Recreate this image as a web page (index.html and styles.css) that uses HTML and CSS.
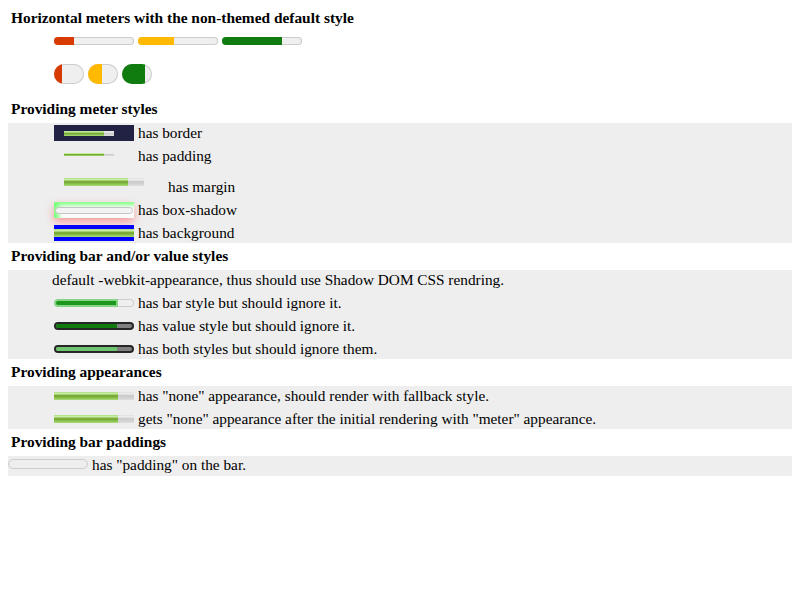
FILE: index.html
```html
<!DOCTYPE html>
<html>
<head>
<meta charset="utf-8">
<link rel="stylesheet" href="styles.css">
</head>
<body>
<div class="heading">Horizontal meters with the non-themed default style</div>
<div class="demo">
  <div class="native-line">
    <div class="native"><div class="nfill red" style="width:25%"></div></div>
    <div class="native"><div class="nfill yellow" style="width:45%"></div></div>
    <div class="native"><div class="nfill green" style="width:75%"></div></div>
  </div>
  <div class="pill-line">
    <div class="native pill"><div class="nfill red" style="width:26%"></div></div>
    <div class="native pill"><div class="nfill yellow" style="width:47%"></div></div>
    <div class="native pill"><div class="nfill green" style="width:75%"></div></div>
  </div>
</div>

<div class="heading">Providing meter styles</div>
<div class="section">
  <div class="row">
    <div class="m-border"><div class="fb fb-border"><div class="fb-value" style="width:80%"></div></div></div>
    <span class="label">has border</span>
  </div>
  <div class="row">
    <div class="m-padding"><div class="fb fb-thin"><div class="fb-value" style="width:80%"></div></div></div>
    <span class="label">has padding</span>
  </div>
  <div class="row tall">
    <div class="m-margin"><div class="fb fb-margin"><div class="fb-value" style="width:80%"></div></div></div>
    <span class="label label-margin">has margin</span>
  </div>
  <div class="row">
    <div class="m-shadow"><div class="shadow-pill"></div></div>
    <span class="label">has box-shadow</span>
  </div>
  <div class="row last">
    <div class="m-background"><div class="fb fb-full"><div class="fb-value" style="width:100%"></div></div></div>
    <span class="label">has background</span>
  </div>
</div>

<div class="heading">Providing bar and/or value styles</div>
<div class="section">
  <div class="row text-row">
    <span class="label">default -webkit-appearance, thus should use Shadow DOM CSS rendring.</span>
  </div>
  <div class="row">
    <div class="native m-barstyle"><div class="bfill" style="width:80%"></div></div>
    <span class="label">has bar style but should ignore it.</span>
  </div>
  <div class="row">
    <div class="m-dark"><div class="vfill" style="width:80%"></div></div>
    <span class="label">has value style but should ignore it.</span>
  </div>
  <div class="row last">
    <div class="m-dark"><div class="vfill light" style="width:80%"></div></div>
    <span class="label">has both styles but should ignore them.</span>
  </div>
</div>

<div class="heading">Providing appearances</div>
<div class="section">
  <div class="row">
    <div class="fb fb-none"><div class="fb-value" style="width:80%"></div></div>
    <span class="label">has "none" appearance, should render with fallback style.</span>
  </div>
  <div class="row last">
    <div class="fb fb-none"><div class="fb-value" style="width:80%"></div></div>
    <span class="label">gets "none" appearance after the initial rendering with "meter" appearance.</span>
  </div>
</div>

<div class="heading">Providing bar paddings</div>
<div class="section flush">
  <div class="row last">
    <div class="padded-bar"></div>
    <span class="label label-pad">has "padding" on the bar.</span>
  </div>
</div>
</body>
</html>
```

FILE: styles.css
```css
html, body {
  background: #ffffff;
}

body {
  margin: 5px 8px 8px 8px;
  font-family: "Liberation Serif", "Times New Roman", serif;
  font-size: 15.4px;
  font-weight: 400;
  color: #000000;
}

.heading {
  height: 27px;
  line-height: 25px;
  padding-left: 3px;
  box-sizing: border-box;
  font-weight: 700;
  white-space: nowrap;
}

.heading:first-child {
  height: 26px;
}

.demo {
  height: 65px;
  padding-left: 46px;
  box-sizing: border-box;
}

.native-line {
  display: flex;
  gap: 4px;
  padding-top: 6px;
}

.pill-line {
  display: flex;
  gap: 4px;
  margin-top: 19px;
}

.native {
  width: 80px;
  height: 8px;
  border-radius: 4px;
  background: #efefef;
  box-shadow: inset 0 0 0 1px #cdcdcd;
  overflow: hidden;
  flex: none;
}

.native.pill {
  width: 30px;
  height: 20px;
  border-radius: 10px;
}

.nfill {
  height: 100%;
}

.nfill.red { background: #d83b01; }
.nfill.yellow { background: #ffb900; }
.nfill.green { background: #107c10; }

.section {
  background: #eeeeee;
  padding-left: 46px;
}

.section.flush {
  padding-left: 0;
}

.row {
  display: flex;
  align-items: flex-start;
  height: 23px;
}

.row.tall {
  height: 31px;
}

.row.last {
  height: 20px;
}

.label {
  font-size: 15.3px;
  line-height: 18px;
  margin-left: 4px;
  margin-top: 1px;
  white-space: nowrap;
}

.text-row .label {
  margin-left: -2px;
}

/* fallback (non-native) meter bar */
.fb {
  background: linear-gradient(to bottom, #ddd, #eee 20%, #ccc 45%, #ccc 55%, #ddd);
  flex: none;
}

.fb-value {
  height: 100%;
  background: linear-gradient(to bottom, #ad7, #cea 20%, #7a3 45%, #7a3 55%, #ad7);
}

.m-border {
  width: 80px;
  height: 16px;
  margin-top: 2px;
  background: #222244;
  box-sizing: border-box;
  padding: 6px 20px 5px 10px;
  flex: none;
}

.fb-border {
  width: 50px;
  height: 5px;
}

.m-padding {
  width: 80px;
  height: 16px;
  box-sizing: border-box;
  padding: 7px 20px 6px 10px;
  flex: none;
}

.fb-thin {
  width: 50px;
  height: 3px;
}

.m-margin {
  padding: 9px 0 0 10px;
  flex: none;
}

.fb-margin {
  width: 80px;
  height: 8px;
}

.label-margin {
  margin-left: 24px;
  margin-top: 9px;
}

.m-shadow {
  width: 80px;
  height: 16px;
  margin-top: 2px;
  box-sizing: border-box;
  padding: 5px 1px 4px 1px;
  background: #fbfbfb;
  box-shadow: inset 5px 3px 4px #80ff80, 0 4px 8px rgba(255, 90, 90, 0.55);
  flex: none;
}

.shadow-pill {
  height: 7px;
  box-sizing: border-box;
  border: 1px solid #c4c4c4;
  border-radius: 4px;
  background: #f3f3f3;
}

.m-background {
  width: 80px;
  height: 16px;
  margin-top: 2px;
  box-sizing: border-box;
  padding: 4px 0;
  background: #0000ff;
  flex: none;
}

.fb-full {
  width: 80px;
  height: 8px;
}

.m-barstyle {
  margin-top: 6px;
}

.bfill {
  height: 100%;
  border-radius: 4px 0 0 4px;
  box-sizing: border-box;
  background: #1d961d;
  border: 2px solid #86d486;
}

.m-dark {
  width: 80px;
  height: 8px;
  margin-top: 6px;
  box-sizing: border-box;
  border: 2px solid #262626;
  border-radius: 4px;
  background: #808080;
  overflow: hidden;
  flex: none;
}

.vfill {
  height: 100%;
  background: #107c10;
}

.vfill.light {
  background: #6fc46f;
}

.fb-none {
  width: 80px;
  height: 8px;
  margin-top: 6px;
}

.padded-bar {
  width: 80px;
  height: 10px;
  margin-top: 3px;
  box-sizing: border-box;
  border: 1px solid #cccccc;
  border-radius: 5px;
  background: #eeeeee;
  flex: none;
}

.label-pad {
  margin-top: 0;
}
```
